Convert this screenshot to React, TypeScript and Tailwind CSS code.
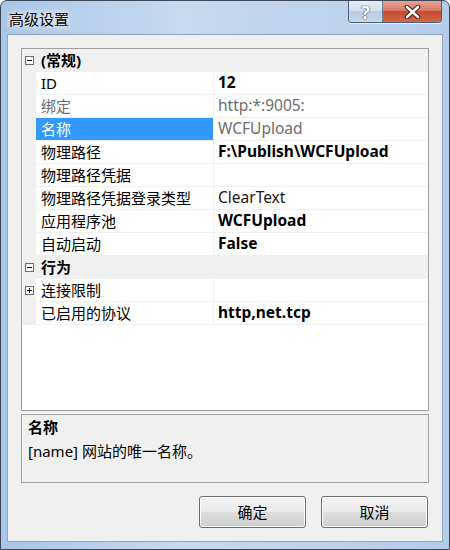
import React from 'react'

const font = "font-['Noto_Sans','Noto_Sans_CJK_SC',sans-serif]"

type Prop = {
  kind: 'prop'
  name: string
  value?: string
  look?: 'bold' | 'gray' | 'normal'
  nameGray?: boolean
  selected?: boolean
  expander?: 'plus'
}
type Cat = { kind: 'cat'; label: string }
type Row = Prop | Cat

const rows: Row[] = [
  { kind: 'cat', label: '(常规)' },
  { kind: 'prop', name: 'ID', value: '12', look: 'bold' },
  { kind: 'prop', name: '绑定', value: 'http:*:9005:', look: 'gray', nameGray: true },
  { kind: 'prop', name: '名称', value: 'WCFUpload', look: 'gray', selected: true },
  { kind: 'prop', name: '物理路径', value: 'F:\\Publish\\WCFUpload', look: 'bold' },
  { kind: 'prop', name: '物理路径凭据', value: '' },
  { kind: 'prop', name: '物理路径凭据登录类型', value: 'ClearText', look: 'normal' },
  { kind: 'prop', name: '应用程序池', value: 'WCFUpload', look: 'bold' },
  { kind: 'prop', name: '自动启动', value: 'False', look: 'bold' },
  { kind: 'cat', label: '行为' },
  { kind: 'prop', name: '连接限制', value: '', expander: 'plus' },
  { kind: 'prop', name: '已启用的协议', value: 'http,net.tcp', look: 'bold' },
]

function Expander({ plus }: { plus?: boolean }) {
  return (
    <svg width="9" height="9" viewBox="0 0 9 9" className="block">
      <rect x="0.5" y="0.5" width="8" height="8" fill="#fff" stroke="#6b6b6b" />
      <line x1="2" y1="4.5" x2="7" y2="4.5" stroke="#000" />
      {plus && <line x1="4.5" y1="2" x2="4.5" y2="7" stroke="#000" />}
    </svg>
  )
}

function GridRow({ row }: { row: Row }) {
  if (row.kind === 'cat') {
    return (
      <div className="flex h-[23px] items-center bg-[#f0f0f0]">
        <div className="flex w-[14px] justify-center pl-[1px]">
          <Expander />
        </div>
        <span className="pl-[5px] text-[15px] font-bold text-black">{row.label}</span>
      </div>
    )
  }
  const valueCls =
    row.look === 'bold'
      ? 'font-bold text-black'
      : row.look === 'gray'
      ? 'text-[#6d6d6d]'
      : 'text-[#1a1a1a]'
  return (
    <div className="flex h-[23px]">
      <div className="flex w-[14px] items-center justify-center bg-[#f0f0f0] pl-[1px]">
        {row.expander && <Expander plus />}
      </div>
      <div className="flex flex-1 border-b border-[#f0f0f0]">
        <div
          className={
            'flex w-[177px] items-center pl-[5px] text-[15px] ' +
            (row.selected ? 'bg-[#3399ff] text-white' : row.nameGray ? 'text-[#6d6d6d]' : 'text-black')
          }
        >
          {row.name}
        </div>
        <div className="w-px bg-[#f0f0f0]" />
        <div className={'flex flex-1 items-center pl-[4px] text-[15.5px] ' + valueCls}>{row.value}</div>
      </div>
    </div>
  )
}

function DlgButton({ label }: { label: string }) {
  return (
    <button className="flex h-[32px] w-[107px] items-center justify-center rounded-[3px] border border-[#707070] bg-[linear-gradient(#f2f2f2_0%,#ebebeb_50%,#dddddd_50%,#cfcfcf_100%)] text-[15px] text-black shadow-[inset_0_0_0_1px_#fcfcfc]">
      {label}
    </button>
  )
}

export default function App() {
  return (
    <div className={'h-[550px] w-[450px] bg-white ' + font}>
      <div className="flex h-[550px] w-[450px] flex-col rounded-t-[7px] border border-[#3b4656] bg-[linear-gradient(90deg,#a9c6e6,#c6daf0_40%,#bcd3ec_75%,#b3cce8)]">
        {/* title bar */}
        <div className="flex h-[33px] items-start">
          <span className="pl-[8px] pt-[8px] text-[15px] leading-[20px] text-black [text-shadow:0_0_8px_#fff,0_0_4px_#fff]">
            高级设置
          </span>
          <div className="ml-auto mr-[7px] flex h-[22px] overflow-hidden rounded-b-[4px] border border-t-0 border-[#4d5f78] shadow-[0_1px_0_#e8f0f8]">
            <div className="flex w-[34px] items-center justify-center border-r border-[#6b7f99] bg-[linear-gradient(#e6eef8_0%,#d3e0ef_45%,#b9cce3_50%,#c8d8ec_100%)]">
              <span className="text-[18px] font-bold leading-none text-white [text-shadow:0_0_1px_#3d4f66,0_0_1px_#3d4f66,0_0_1px_#3d4f66]">
                ?
              </span>
            </div>
            <div className="flex w-[58px] items-center justify-center bg-[linear-gradient(#e8a493_0%,#d87a67_45%,#c44a32_50%,#d5684c_100%)]">
              <svg width="17" height="14" viewBox="0 0 17 14">
                <path d="M3 2 L14 12 M14 2 L3 12" stroke="#4a1a12" strokeWidth="4.6" strokeLinecap="round" />
                <path d="M3 2 L14 12 M14 2 L3 12" stroke="#fff" strokeWidth="2.6" strokeLinecap="round" />
              </svg>
            </div>
          </div>
        </div>

        {/* client area */}
        <div className="mx-[6px] mb-[7px] flex flex-1 flex-col border border-[#8ea6c2] bg-[#f0f0f0] px-[13px] pt-[13px] pb-[13px]">
          <div className="h-[363px] border border-[#a0a0a0] bg-white">
            {rows.map((r, i) => (
              <GridRow key={i} row={r} />
            ))}
          </div>
          <div className="mt-[3px] h-[69px] border border-[#a0a0a0] bg-[#f0f0f0] pl-[6px] pt-[1px]">
            <div className="text-[15px] font-bold leading-[23px] text-black">名称</div>
            <div className="text-[15px] leading-[24px] text-black">[name] 网站的唯一名称。</div>
          </div>
          <div className="mt-auto flex justify-end gap-[15px] pr-[1px]">
            <DlgButton label="确定" />
            <DlgButton label="取消" />
          </div>
        </div>
      </div>
    </div>
  )
}
